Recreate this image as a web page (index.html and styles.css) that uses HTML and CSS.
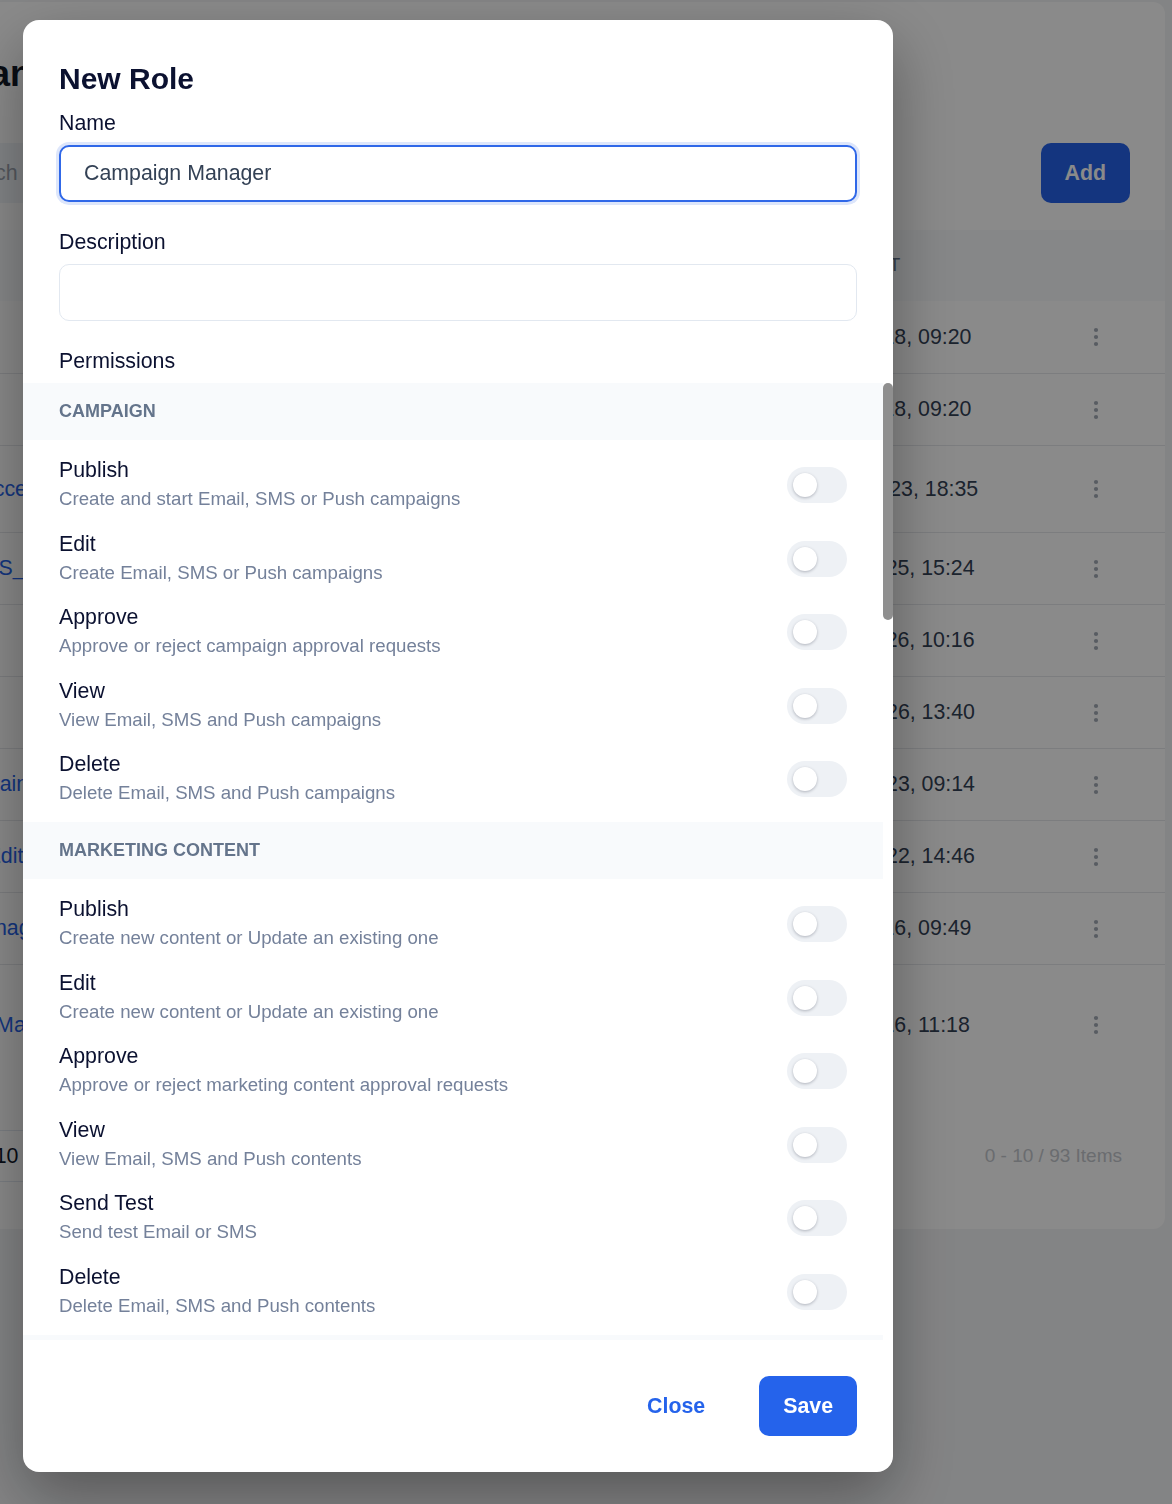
FILE: index.html
```html
<!DOCTYPE html>
<html lang="en">
<head>
<meta charset="utf-8">
<title>Role Management</title>
<link rel="stylesheet" href="styles.css">
</head>
<body>
<div class="page">
  <main class="card">
    <h1 class="page-title">Role Management</h1>
    <div class="toolbar">
      <label class="search">
        <svg class="search-icon" viewBox="0 0 24 24" fill="none" stroke="#94a3b8" stroke-width="2" stroke-linecap="round"><circle cx="11" cy="11" r="7"/><path d="M20 20l-4-4"/></svg>
        <input class="search-input" type="text" placeholder="Search">
      </label>
      <button class="btn btn-primary" type="button">Add</button>
    </div>
    <div class="table">
      <div class="tr th"><div>NAME</div><div>DESCRIPTION</div><div>CREATED AT</div><div></div></div>
      <div class="tr"><a class="link" href="#">Admin</a><div class="muted">Full access to every module</div><div class="date">Mon, Oct 18, 09:20</div><div class="act"><svg class="kebab" viewBox="0 0 24 24"><circle cx="12" cy="5" r="2.1"/><circle cx="12" cy="12" r="2.1"/><circle cx="12" cy="19" r="2.1"/></svg></div></div>
      <div class="tr"><a class="link" href="#">Viewer</a><div class="muted">Read only access</div><div class="date">Mon, Oct 18, 09:20</div><div class="act"><svg class="kebab" viewBox="0 0 24 24"><circle cx="12" cy="5" r="2.1"/><circle cx="12" cy="12" r="2.1"/><circle cx="12" cy="19" r="2.1"/></svg></div></div>
      <div class="tr tr-tall"><a class="link" href="#">Limited Access</a><div class="muted">Access to campaigns and contents only</div><div class="date">Wed, Sep 23, 18:35</div><div class="act"><svg class="kebab" viewBox="0 0 24 24"><circle cx="12" cy="5" r="2.1"/><circle cx="12" cy="12" r="2.1"/><circle cx="12" cy="19" r="2.1"/></svg></div></div>
      <div class="tr"><a class="link" href="#">Push_SMS_</a><div class="muted">Push and SMS channels</div><div class="date">Wed, Jun 25, 15:24</div><div class="act"><svg class="kebab" viewBox="0 0 24 24"><circle cx="12" cy="5" r="2.1"/><circle cx="12" cy="12" r="2.1"/><circle cx="12" cy="19" r="2.1"/></svg></div></div>
      <div class="tr"><a class="link" href="#">Approver</a><div class="muted">Approves campaigns</div><div class="date">Wed, Jun 26, 10:16</div><div class="act"><svg class="kebab" viewBox="0 0 24 24"><circle cx="12" cy="5" r="2.1"/><circle cx="12" cy="12" r="2.1"/><circle cx="12" cy="19" r="2.1"/></svg></div></div>
      <div class="tr"><a class="link" href="#">Publisher</a><div class="muted">Publishes campaigns</div><div class="date">Mon, Aug 26, 13:40</div><div class="act"><svg class="kebab" viewBox="0 0 24 24"><circle cx="12" cy="5" r="2.1"/><circle cx="12" cy="12" r="2.1"/><circle cx="12" cy="19" r="2.1"/></svg></div></div>
      <div class="tr"><a class="link" href="#">Partner Maintainer</a><div class="muted">Maintains partner content</div><div class="date">Mon, Aug 23, 09:14</div><div class="act"><svg class="kebab" viewBox="0 0 24 24"><circle cx="12" cy="5" r="2.1"/><circle cx="12" cy="12" r="2.1"/><circle cx="12" cy="19" r="2.1"/></svg></div></div>
      <div class="tr"><a class="link" href="#">Content Editor</a><div class="muted">Edits marketing content</div><div class="date">Mon, Aug 22, 14:46</div><div class="act"><svg class="kebab" viewBox="0 0 24 24"><circle cx="12" cy="5" r="2.1"/><circle cx="12" cy="12" r="2.1"/><circle cx="12" cy="19" r="2.1"/></svg></div></div>
      <div class="tr"><a class="link" href="#">Sales Manager</a><div class="muted">Sales team lead</div><div class="date">Mon, Oct 16, 09:49</div><div class="act"><svg class="kebab" viewBox="0 0 24 24"><circle cx="12" cy="5" r="2.1"/><circle cx="12" cy="12" r="2.1"/><circle cx="12" cy="19" r="2.1"/></svg></div></div>
      <div class="tr tr-xtall"><a class="link" href="#">Regional Marketing</a><div class="muted">Regional marketing team</div><div class="date">Mon, Oct 16, 11:18</div><div class="act"><svg class="kebab" viewBox="0 0 24 24"><circle cx="12" cy="5" r="2.1"/><circle cx="12" cy="12" r="2.1"/><circle cx="12" cy="19" r="2.1"/></svg></div></div>
    </div>
    <div class="pager">
      <div class="pager-size"><span>Per page</span><div class="select">10 <svg class="chev" viewBox="0 0 24 24" fill="none" stroke="#64748b" stroke-width="2" stroke-linecap="round" stroke-linejoin="round"><path d="M6 9l6 6 6-6"/></svg></div></div>
      <div class="pager-info">0 - 10 / 93 Items</div>
    </div>
  </main>
</div>

<div class="overlay">
  <section class="modal">
    <div class="modal-head">
      <h2 class="modal-title">New Role</h2>
      <div class="field">
        <label class="field-label" for="role-name">Name</label>
        <input id="role-name" class="input input-focus" type="text" value="Campaign Manager">
      </div>
      <div class="field">
        <label class="field-label" for="role-desc">Description</label>
        <input id="role-desc" class="input" type="text">
      </div>
      <div class="field-label">Permissions</div>
    </div>

    <div class="perm-wrap">
      <div class="perm-list">
        <div class="perm-group">
          <div class="perm-head">CAMPAIGN</div>
          <div class="perm-items">
            <div class="perm-item"><div><div class="perm-title">Publish</div><div class="perm-desc">Create and start Email, SMS or Push campaigns</div></div><span class="toggle"><span class="knob"></span></span></div>
            <div class="perm-item"><div><div class="perm-title">Edit</div><div class="perm-desc">Create Email, SMS or Push campaigns</div></div><span class="toggle"><span class="knob"></span></span></div>
            <div class="perm-item"><div><div class="perm-title">Approve</div><div class="perm-desc">Approve or reject campaign approval requests</div></div><span class="toggle"><span class="knob"></span></span></div>
            <div class="perm-item"><div><div class="perm-title">View</div><div class="perm-desc">View Email, SMS and Push campaigns</div></div><span class="toggle"><span class="knob"></span></span></div>
            <div class="perm-item"><div><div class="perm-title">Delete</div><div class="perm-desc">Delete Email, SMS and Push campaigns</div></div><span class="toggle"><span class="knob"></span></span></div>
          </div>
        </div>
        <div class="perm-group">
          <div class="perm-head">MARKETING CONTENT</div>
          <div class="perm-items">
            <div class="perm-item"><div><div class="perm-title">Publish</div><div class="perm-desc">Create new content or Update an existing one</div></div><span class="toggle"><span class="knob"></span></span></div>
            <div class="perm-item"><div><div class="perm-title">Edit</div><div class="perm-desc">Create new content or Update an existing one</div></div><span class="toggle"><span class="knob"></span></span></div>
            <div class="perm-item"><div><div class="perm-title">Approve</div><div class="perm-desc">Approve or reject marketing content approval requests</div></div><span class="toggle"><span class="knob"></span></span></div>
            <div class="perm-item"><div><div class="perm-title">View</div><div class="perm-desc">View Email, SMS and Push contents</div></div><span class="toggle"><span class="knob"></span></span></div>
            <div class="perm-item"><div><div class="perm-title">Send Test</div><div class="perm-desc">Send test Email or SMS</div></div><span class="toggle"><span class="knob"></span></span></div>
            <div class="perm-item"><div><div class="perm-title">Delete</div><div class="perm-desc">Delete Email, SMS and Push contents</div></div><span class="toggle"><span class="knob"></span></span></div>
          </div>
        </div>
        <div class="perm-group">
          <div class="perm-head">AUDIENCE</div>
          <div class="perm-items">
            <div class="perm-item"><div><div class="perm-title">Import</div><div class="perm-desc">Import contacts from a CSV file</div></div><span class="toggle"><span class="knob"></span></span></div>
            <div class="perm-item"><div><div class="perm-title">View</div><div class="perm-desc">View contacts and their attributes</div></div><span class="toggle"><span class="knob"></span></span></div>
          </div>
        </div>
      </div>
      <div class="scroll-track" aria-hidden="true"><div class="scroll-thumb"></div></div>
    </div>

    <div class="modal-foot">
      <button class="btn btn-text" type="button">Close</button>
      <button class="btn btn-primary" type="button">Save</button>
    </div>
  </section>
</div>
</body>
</html>
```

FILE: styles.css
```css
* { box-sizing: border-box; }

html, body {
  margin: 0;
  height: 100%;
}

body {
  font-family: "Liberation Sans", Arial, Helvetica, sans-serif;
  background: #f3f4f6;
  color: #0f172a;
  overflow: hidden;
}

/* ---------- background page ---------- */
.page {
  padding-top: 2px;
}

.card {
  width: 1319px;
  height: 1227px;
  margin-left: -154px;
  padding-top: 50px;
  background: #ffffff;
  border-radius: 12px;
}

.page-title {
  margin: 0;
  padding: 0 26px;
  font-size: 36px;
  line-height: 44px;
  font-weight: 700;
  color: #111827;
  white-space: nowrap;
}

.toolbar {
  display: flex;
  justify-content: space-between;
  align-items: center;
  margin-top: 47px;
  padding: 0 35px 0 36px;
}

.search {
  display: flex;
  align-items: center;
  gap: 24px;
  width: 480px;
  height: 60px;
  padding-left: 24px;
  background: #f1f5f9;
  border-radius: 10px;
}

.search-icon {
  width: 20px;
  height: 20px;
  flex: none;
}

.search-input {
  width: 100%;
  padding: 0;
  border: 0;
  outline: none;
  background: transparent;
  font-family: inherit;
  font-size: 21.33px;
  color: #0f172a;
}

.search-input::placeholder { color: #9ca3af; }

.btn {
  height: 60px;
  padding: 0 24px;
  border: 0;
  border-radius: 10px;
  font-family: inherit;
  font-size: 21.33px;
  font-weight: 700;
  cursor: pointer;
}

.btn-primary {
  background: #2563eb;
  color: #ffffff;
}

.btn-text {
  background: transparent;
  color: #2563eb;
}

.table {
  margin-top: 27px;
}

.tr {
  display: grid;
  grid-template-columns: 420px 1fr 273px 66px;
  align-items: center;
  height: 72px;
  padding: 0 36px 0 60px;
  font-size: 21.33px;
}

.tr + .tr { border-top: 1px solid #e5e7eb; }

.th {
  height: 71px;
  background: #f8fafc;
  font-size: 18px;
  color: #64748b;
}

.th + .tr { border-top: 0; }

.tr-tall { height: 87px; }
.tr-xtall { height: 121px; }

.link {
  color: #2563eb;
  text-decoration: none;
  white-space: nowrap;
}

.muted {
  color: #64748b;
  white-space: nowrap;
  overflow: hidden;
}

.date {
  color: #334155;
  white-space: nowrap;
}

.act {
  display: flex;
  justify-content: center;
}

.kebab {
  width: 24px;
  height: 24px;
  fill: #a3aab6;
}

.pager {
  display: flex;
  justify-content: space-between;
  align-items: center;
  padding: 45px 43px 47px 36px;
}

.pager-size {
  display: flex;
  align-items: center;
  gap: 16px;
  font-size: 18.67px;
  color: #64748b;
}

.select {
  display: flex;
  align-items: center;
  gap: 12px;
  height: 52px;
  padding: 0 20px;
  border: 1px solid #e2e8f0;
  border-radius: 8px;
  font-size: 21.33px;
  color: #0f172a;
}

.chev {
  width: 18px;
  height: 18px;
}

.pager-info {
  font-size: 19px;
  color: #c4c8ce;
}

/* ---------- modal ---------- */
.overlay {
  position: fixed;
  inset: 0;
  padding: 20px 0 0 23px;
  background: rgba(0, 0, 0, 0.46);
}

.modal {
  display: flex;
  flex-direction: column;
  width: 870px;
  height: 1452px;
  background: #ffffff;
  border-radius: 16px;
  overflow: hidden;
  box-shadow: 0 24px 64px rgba(0, 0, 0, 0.35);
}

.modal-head {
  flex: none;
  padding: 41px 36px 0;
}

.modal-title {
  margin: 0 0 12px;
  font-size: 30px;
  line-height: 36px;
  font-weight: 700;
  color: #0b1130;
}

.field {
  margin-bottom: 26px;
}

.field-label {
  display: block;
  margin-bottom: 8px;
  font-size: 21.33px;
  line-height: 28px;
  color: #0b1130;
}

.input {
  display: block;
  width: 100%;
  height: 57px;
  padding: 0 23px;
  border: 1px solid #e2e8f0;
  border-radius: 10px;
  outline: none;
  font-family: inherit;
  font-size: 21.33px;
  color: #334155;
  background: #ffffff;
}

.input-focus {
  border: 2px solid #3068e8;
  box-shadow: 0 0 0 3px #dde6fb;
}

.perm-wrap {
  display: flex;
  flex: 1;
  min-height: 0;
}

.perm-list {
  flex: 1;
  min-width: 0;
  overflow-y: auto;
  scrollbar-width: none;
}

.perm-list::-webkit-scrollbar { display: none; }

.scroll-track {
  flex: none;
  width: 10px;
}

.scroll-thumb {
  height: 237px;
  border-radius: 5px;
  background: #8f8f8f;
}

.perm-head {
  display: flex;
  align-items: center;
  height: 57px;
  padding: 0 36px;
  background: #f8fafc;
  font-size: 18px;
  font-weight: 700;
  color: #64748b;
}

.perm-items {
  display: flex;
  flex-direction: column;
  gap: 15.5px;
  padding: 16px 36px 14px;
}

.perm-item {
  display: flex;
  justify-content: space-between;
  align-items: center;
}

.perm-title {
  font-size: 21.33px;
  line-height: 28px;
  color: #0b1130;
}

.perm-desc {
  font-size: 18.67px;
  line-height: 30px;
  color: #74819a;
}

.toggle {
  display: inline-flex;
  align-items: center;
  flex: none;
  width: 60px;
  height: 36px;
  padding-left: 6px;
  border-radius: 18px;
  background: #eef1f5;
}

.knob {
  width: 24px;
  height: 24px;
  border-radius: 50%;
  background: #ffffff;
  box-shadow: 0 1px 3px rgba(15, 23, 42, 0.28);
}

.modal-foot {
  flex: none;
  display: flex;
  justify-content: flex-end;
  gap: 30px;
  padding: 36px;
}
```
